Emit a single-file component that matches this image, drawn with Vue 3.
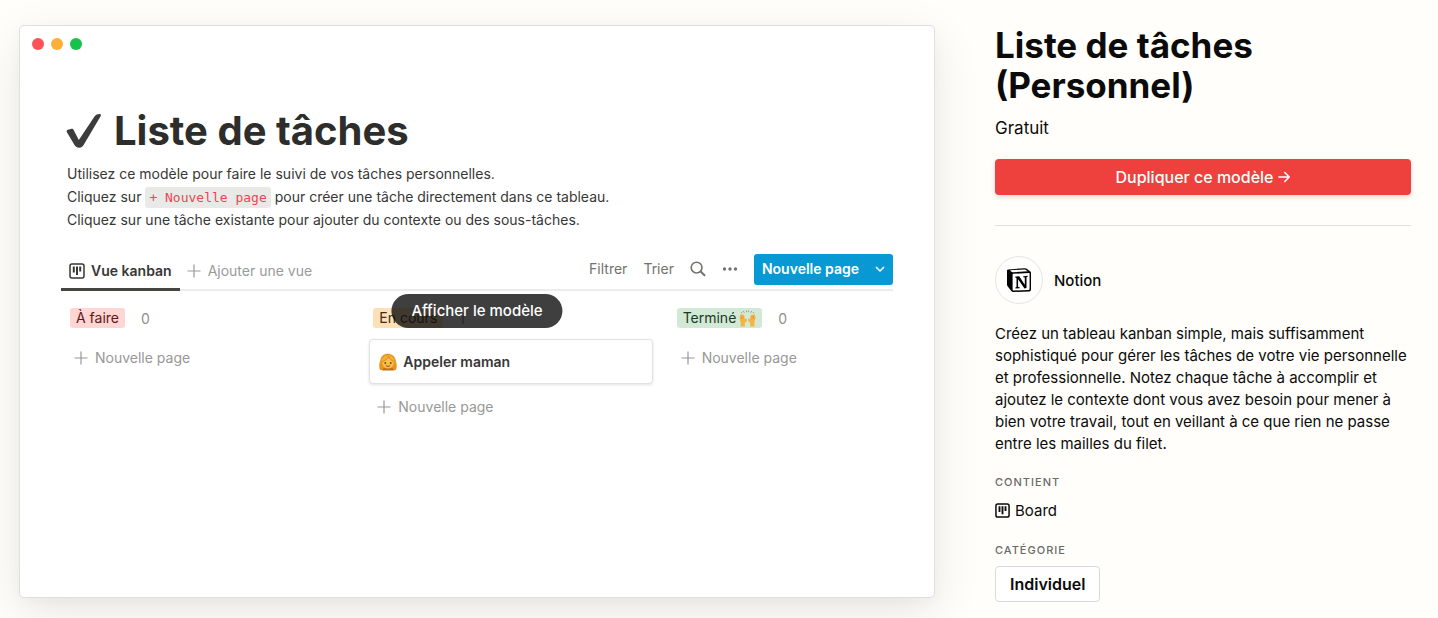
<script setup>
const columns = [
  { name: 'À faire', tone: 'red', count: 0, cards: [] },
  { name: 'En cours', tone: 'yellow', count: 1, cards: ['Appeler maman'] },
  { name: 'Terminé', tone: 'green', count: 0, cards: [], hands: true },
]
</script>

<template>
  <main class="page">
    <section class="window" aria-label="Aperçu du modèle">
      <div class="lights" aria-hidden="true">
        <span class="light close"></span>
        <span class="light reduce"></span>
        <span class="light expand"></span>
      </div>

      <div class="document">
        <h2 class="doc-title">
          <svg class="check" viewBox="0 0 36 36" aria-hidden="true">
            <path d="M.8 19C.4 17.800 .8 17.200 2 16.800L4.800 16C6.300 15.600 7.200 16.100 7.900 17.400L12.800 27L28.500 3.500C30 1.500 31.500 .9 33.500 .9C35 .9 35.300 1.800 34.600 3.200L18.500 30.500C16.800 33.500 15.500 34.700 13.300 34.700C11 34.700 9.800 34 8.500 32Z" fill="#3c3c3c" />
          </svg>
          <span>Liste de tâches</span>
        </h2>

        <p class="intro">
          Utilisez ce modèle pour faire le suivi de vos tâches personnelles.<br>
          Cliquez sur <code>+ Nouvelle page</code> pour créer une tâche directement dans ce tableau.<br>
          Cliquez sur une tâche existante pour ajouter du contexte ou des sous-tâches.
        </p>

        <div class="toolbar">
          <button class="tab" type="button">
            <svg class="icon16" viewBox="0 0 16 16" aria-hidden="true">
              <rect x="1" y="1" width="14" height="14" rx="2" fill="none" stroke="currentColor" stroke-width="1.500" />
              <path d="M4.800 3.500V9.500M8 3.500V12M11.200 3.500V8.500" fill="none" stroke="currentColor" stroke-width="2" />
            </svg>
            Vue kanban
          </button>
          <button class="add-view" type="button">
            <svg class="plus" viewBox="0 0 14 14" aria-hidden="true"><path d="M7 0.500V13.500M0.500 7H13.500" /></svg>
            Ajouter une vue
          </button>
          <div class="tools">
            <button class="tool" type="button">Filtrer</button>
            <button class="tool" type="button">Trier</button>
            <button class="tool" type="button" aria-label="Rechercher">
              <svg class="icon16" viewBox="0 0 16 16" fill="none" stroke="currentColor" stroke-width="1.600" stroke-linecap="round" aria-hidden="true">
                <circle cx="6.600" cy="6.600" r="5.400" />
                <path d="M10.600 10.600L14.500 14.300" stroke-width="2" />
              </svg>
            </button>
            <button class="tool" type="button" aria-label="Plus d’options">
              <svg class="icon16" viewBox="0 0 16 16" fill="currentColor" aria-hidden="true">
                <circle cx="2.500" cy="8" r="1.700" /><circle cx="8" cy="8" r="1.700" /><circle cx="13.500" cy="8" r="1.700" />
              </svg>
            </button>
            <button class="new-page" type="button">
              Nouvelle page
              <svg class="chevron" viewBox="0 0 10 10" fill="none" stroke="currentColor" stroke-width="1.500" aria-hidden="true"><path d="M1 3L5 7L9 3" /></svg>
            </button>
          </div>
        </div>

        <div class="board">
          <section v-for="column in columns" :key="column.name" class="column">
            <header class="column-head">
              <h3 class="tag" :class="column.tone">
                {{ column.name }}
                <svg v-if="column.hands" class="hands" viewBox="0 0 16 16" aria-hidden="true">
                  <path d="M4 1L5 2.600M7 .5V2M9 .5V2M12 1L11 2.600M2 2L3 3M14 2L13 3" stroke="#9a8f78" stroke-width=".8" fill="none" />
                  <path d="M1 4.500L2 4L3 5L4 4L5 5.500L5.500 8.500L7.300 8V10.500L5.500 12V15.500H1.500V11.500L.5 8Z" fill="#f5b544" />
                  <path d="M15 4.500L14 4L13 5L12 4L11 5.500L10.500 8.500L8.700 8V10.500L10.500 12V15.500H14.500V11.500L15.500 8Z" fill="#f5b544" />
                  <path d="M2.300 5V8.500M3.800 5.500V8.500M13.700 5V8.500M12.200 5.500V8.500" stroke="#dd912a" stroke-width=".6" />
                </svg>
              </h3>
              <span class="count">{{ column.count }}</span>
            </header>
            <article v-for="card in column.cards" :key="card" class="card">
              <svg class="woman" viewBox="0 0 18 18" aria-hidden="true">
                <path d="M1 17C-.5 13 .5 10 1.500 6.500C2.500 2.500 5.500 .8 9 .8C12.500 .8 15.500 3 16.500 6.500C17.500 10 18.500 13 17 17Z" fill="#e8951f" />
                <path d="M3 17.500C4 14.500 7 14 9 14C12 14 14.500 15 15.500 17.500Z" fill="#bd7420" />
                <path d="M3.300 8C5 7 8 6 9.500 4C11 6 12.500 7 14.700 8C15 12 13 15.500 9 15.500C5 15.500 3 12 3.300 8Z" fill="#fbc04a" />
                <path d="M2.500 9.500C2 5.500 5 2 10 2.200C9 5.500 6 7.500 2.500 9.500ZM10 2.200C13 2.500 15.500 5.500 15.500 9.500C12.500 8 10 6 10 2.200Z" fill="#f6b132" />
                <path d="M3 8.800C6 7.500 8.500 6 9.800 3.800C10.800 6 12.500 7.500 15 8.700" fill="none" stroke="#c9781c" stroke-width=".7" />
                <circle cx="6.300" cy="10" r=".9" fill="#63401f" /><circle cx="11.700" cy="10" r=".9" fill="#63401f" />
                <path d="M6.800 12.400C8 13.700 10 13.700 11.200 12.400" fill="none" stroke="#a2452b" stroke-width="1" />
              </svg>
              {{ card }}
            </article>
            <button class="add-card" type="button">
              <svg class="plus" viewBox="0 0 14 14" aria-hidden="true"><path d="M7 0.500V13.500M0.500 7H13.500" /></svg>
              Nouvelle page
            </button>
          </section>
        </div>
      </div>

      <a class="show" href="#">Afficher le modèle</a>
    </section>

    <aside class="details">
      <h1 class="title">Liste de tâches (Personnel)</h1>
      <p class="price">Gratuit</p>
      <button class="duplicate" type="button">
        Dupliquer ce modèle
        <svg class="arrow" viewBox="0 0 12 12" fill="none" stroke="currentColor" stroke-width="1.600" stroke-linecap="round" stroke-linejoin="round" aria-hidden="true"><path d="M1 6H11M6.800 1.500L11.200 6L6.800 10.500" /></svg>
      </button>
      <hr class="rule">

      <a class="author" href="#">
        <span class="avatar">
          <svg class="logo" viewBox="0 0 24 24" aria-hidden="true">
            <path d="M1 1.500L17.500.2C18.500.1 19 .3 19.700.8L23 3.200C23.700 3.700 24 4 24 5V21.500C24 22.700 23.500 23.300 22.300 23.400L6.500 24C5.500 24 5 23.700 4.300 23L.8 18.500C.2 17.700 0 17.200 0 16.500V3C0 2 .3 1.600 1 1.500Z" fill="#000" />
            <path d="M3 2.300L17.300 1.400C18 1.400 18.300 1.500 18.800 1.900L20.800 3.300L6.200 4.300C5.400 4.300 5 4.200 4.500 3.800Z" fill="#fff" />
            <path d="M6.300 5.800L21.800 4.900C22.400 4.900 22.600 5.100 22.600 5.700V20.700C22.600 21.500 22.400 21.800 21.700 21.900L6.700 22.500C6 22.500 5.600 22.200 5.600 21.500V6.700C5.600 6.100 5.800 5.800 6.300 5.800Z" fill="#fff" />
            <path d="M8.400 8.600L12.200 8.300L17.800 16.800V9.500L16.300 9.200V8.200L20.700 7.800V8.800L19.500 9.300V20L17.500 20.400L11.100 11.200V18.900L12.700 19.300V20.200L8.400 20.500V19.500L9.500 19.100V9.900L8.400 9.700Z" fill="#000" />
          </svg>
        </span>
        Notion
      </a>

      <p class="description">
        Créez un tableau kanban simple, mais suffisamment sophistiqué pour gérer les tâches de votre vie personnelle et professionnelle. Notez chaque tâche à accomplir et ajoutez le contexte dont vous avez besoin pour mener à bien votre travail, tout en veillant à ce que rien ne passe entre les mailles du filet.
      </p>

      <h2 class="label">CONTIENT</h2>
      <p class="contains">
        <svg class="board-icon" viewBox="0 0 16 16" aria-hidden="true">
          <rect x="1" y="1" width="14" height="14" rx="2" fill="none" stroke="currentColor" stroke-width="1.600" />
          <path d="M4.800 3.500V9.500M8 3.500V12M11.200 3.500V8.500" fill="none" stroke="currentColor" stroke-width="2" />
        </svg>
        Board
      </p>

      <h2 class="label">CATÉGORIE</h2>
      <a class="category" href="#">Individuel</a>
    </aside>
  </main>
</template>

<style>
body {
  background: #fffefa;
}
</style>

<style scoped>
.page {
  display: grid;
  grid-template-columns: minmax(0, 1fr) 416px;
  gap: 60px;
  align-items: start;
  box-sizing: border-box;
  min-height: 100vh;
  padding: 25px 27px 16px 19px;
  font-family: Inter, "Liberation Sans", sans-serif;
  font-size: 15px;
  color: #0b0b0b;
}
h1, h2, h3, p {
  margin: 0;
}
a {
  color: inherit;
  text-decoration: none;
}
button {
  padding: 0;
  border: 0;
  background: none;
  color: inherit;
  font: inherit;
  cursor: pointer;
}
.window {
  position: relative;
  box-sizing: border-box;
  aspect-ratio: 8 / 5;
  padding: 12px 41px 0;
  border: 1px solid #dfdfdd;
  border-radius: 5px;
  background: #fff;
  box-shadow: 0 5px 15px rgba(15, 15, 15, 0.03), 0 15px 50px rgba(15, 15, 15, 0.09);
}
.lights {
  display: flex;
  gap: 7px;
  margin-left: -29px;
}
.light {
  width: 12px;
  height: 12px;
  border-radius: 50%;
}
.close { background: #fe5257; }
.reduce { background: #fdb039; }
.expand { background: #16c24a; }
.document {
  padding-top: 54px;
  font-size: 14px;
  color: #373735;
}
.doc-title {
  display: flex;
  align-items: center;
  gap: 12px;
  padding-left: 5px;
  font-size: 40px;
  line-height: 54px;
  font-weight: 700;
  color: #2d2d2b;
}
.check {
  width: 36px;
  height: 36px;
}
.intro {
  margin-top: 4px;
  padding-left: 6px;
  line-height: 23px;
}
.intro code {
  padding: 3px 4px;
  border-radius: 3px;
  background: #e9e9e7;
  color: #eb4454;
  font-family: "DejaVu Sans Mono", "Liberation Mono", monospace;
  font-size: 13px;
  line-height: 16px;
}
.toolbar {
  display: flex;
  align-items: center;
  height: 40px;
  margin-top: 18px;
  border-bottom: 2px solid #ececeb;
  line-height: 20px;
}
.tab {
  display: flex;
  align-items: center;
  align-self: stretch;
  gap: 6px;
  margin-bottom: -2px;
  padding: 4px 8px 0;
  border-bottom: 3px solid #444442;
  font-weight: 600;
}
.icon16 {
  display: block;
  width: 16px;
  height: 16px;
}
.plus {
  width: 14px;
  height: 14px;
  fill: none;
  stroke: currentColor;
  stroke-width: 1.2;
}
.add-view {
  display: flex;
  align-items: center;
  gap: 7px;
  padding: 4px 0 0 7px;
  color: #9a9a98;
}
.tools {
  display: flex;
  align-items: center;
  gap: 16px;
  margin-left: auto;
}
.tool {
  color: #72726f;
}
.new-page {
  display: flex;
  align-items: center;
  gap: 16px;
  height: 31px;
  padding: 0 8px;
  border-radius: 3px;
  background: #0699d3;
  color: #fff;
  font-weight: 600;
}
.chevron {
  width: 10px;
  height: 10px;
}
.board {
  display: grid;
  grid-template-columns: minmax(0, 9fr) minmax(0, 9fr) minmax(0, 7fr);
  gap: 20px;
  align-items: start;
  padding: 17px 0 0 5px;
}
.column-head {
  display: flex;
  align-items: center;
  gap: 16px;
  padding-left: 4px;
}
.tag {
  display: flex;
  align-items: center;
  gap: 3px;
  padding: 0 6px;
  border-radius: 3px;
  font-size: 14px;
  line-height: 20px;
  font-weight: 400;
}
.red { background: #ffd6d3; color: #5d1715; }
.yellow { background: #fde0b5; color: #402c1b; }
.green { background: #d2e9d5; color: #1c3829; }
.hands {
  width: 17px;
  height: 17px;
}
.count {
  color: #8f8f8d;
}
.card {
  display: flex;
  align-items: center;
  gap: 6px;
  height: 43px;
  margin-top: 11px;
  padding: 0 9px;
  border: 1px solid #e2e2e0;
  border-radius: 4px;
  background: #fff;
  box-shadow: 0 1px 3px rgba(15, 15, 15, 0.12);
  font-weight: 600;
}
.woman {
  width: 18px;
  height: 18px;
}
.add-card {
  display: flex;
  align-items: center;
  gap: 7px;
  margin-top: 13px;
  padding-left: 8px;
  line-height: 20px;
  color: #989896;
}
.column-head + .add-card {
  margin-top: 20px;
}
.show {
  position: absolute;
  top: 50%;
  left: 50%;
  transform: translate(-50%, -50%);
  padding: 0 20px;
  border-radius: 17px;
  background: rgba(15, 15, 15, 0.8);
  color: #fff;
  font-size: 15px;
  line-height: 34px;
  font-weight: 500;
  white-space: nowrap;
}
.title {
  max-width: 300px;
  font-size: 35px;
  line-height: 40px;
  font-weight: 700;
}
.price {
  margin-top: 11px;
  font-size: 17px;
  line-height: 24px;
}
.duplicate {
  display: flex;
  align-items: center;
  justify-content: center;
  gap: 5px;
  width: 100%;
  height: 36px;
  margin-top: 19px;
  border-radius: 4px;
  background: #ee403d;
  box-shadow: 0 2px 5px rgba(15, 15, 15, 0.15);
  color: #fff;
  font-size: 16px;
  font-weight: 500;
}
.arrow {
  width: 12px;
  height: 12px;
}
.rule {
  height: 1px;
  margin: 30px 0;
  border: 0;
  background: #e2e1de;
}
.author {
  display: flex;
  align-items: center;
  gap: 11px;
  font-weight: 500;
}
.avatar {
  display: grid;
  place-items: center;
  box-sizing: border-box;
  width: 48px;
  height: 48px;
  border: 1px solid #e6e5e2;
  border-radius: 50%;
  background: #fffefc;
}
.logo {
  width: 24px;
  height: 24px;
}
.description {
  margin: 19px 0;
  line-height: 22px;
}
.label {
  font-size: 11px;
  line-height: 16px;
  font-weight: 500;
  letter-spacing: 1px;
  color: #6b6a67;
}
.contains {
  display: flex;
  align-items: center;
  gap: 5px;
  margin: 10px 0 20px;
  line-height: 22px;
}
.board-icon {
  width: 15px;
  height: 15px;
  margin-bottom: 2px;
}
.category {
  display: inline-block;
  margin-top: 8px;
  padding: 0 14px;
  border: 1px solid #d9d9d8;
  border-radius: 4px;
  background: #fff;
  font-size: 16px;
  line-height: 34px;
  font-weight: 600;
}
</style>
